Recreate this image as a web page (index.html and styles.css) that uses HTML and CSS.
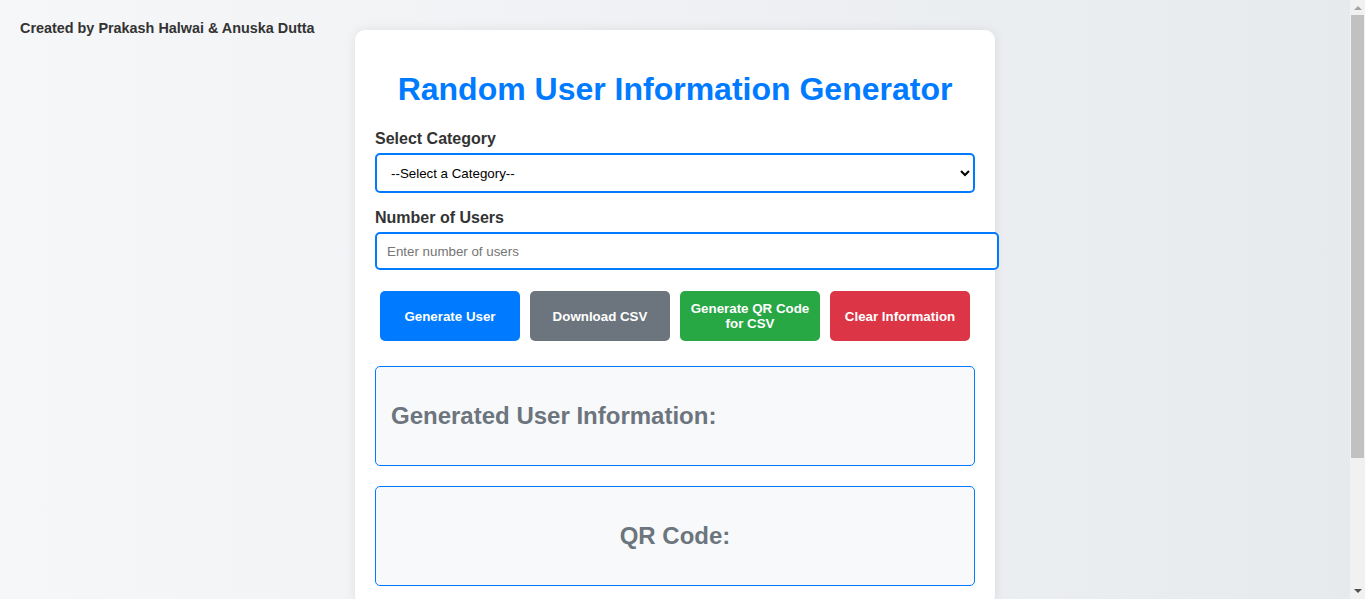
FILE: index.html
```html
<!DOCTYPE html>
<html lang="en">
<head>
<meta charset="UTF-8">
<title>Random User Information Generator</title>
<link rel="stylesheet" href="styles.css">
</head>
<body>
<div class="credit">Created by Prakash Halwai &amp; Anuska Dutta</div>
<div class="container">
  <h1 class="title">Random User Information Generator</h1>
  <label class="field-label" for="category">Select Category</label>
  <select id="category" class="select">
    <option>--Select a Category--</option>
  </select>
  <label class="field-label" for="count">Number of Users</label>
  <input id="count" class="input" type="number" placeholder="Enter number of users">
  <div class="buttons">
    <button class="btn btn-blue">Generate User</button>
    <button class="btn btn-gray">Download CSV</button>
    <button class="btn btn-green">Generate QR Code for CSV</button>
    <button class="btn btn-red">Clear Information</button>
  </div>
  <div class="box">
    <h2 class="box-title">Generated User Information:</h2>
  </div>
  <div class="box box-center">
    <h2 class="box-title">QR Code:</h2>
  </div>
</div>
<div class="scrollbar" aria-hidden="true">
  <div class="scroll-arrow scroll-up"></div>
  <div class="scroll-thumb"></div>
  <div class="scroll-arrow scroll-down"></div>
</div>
</body>
</html>
```
FILE: styles.css
```css
html, body {
  margin: 0;
  padding: 0;
}
body {
  font-family: "Liberation Sans", Arial, sans-serif;
  background: linear-gradient(to right, #f6f7f9, #e7eaed);
  min-height: 100vh;
  position: relative;
  color: #333;
  padding-right: 15px;
}
.credit {
  position: absolute;
  top: 20px;
  left: 20px;
  font-size: 14.4px;
  font-weight: bold;
  color: #333;
}
.container {
  width: 600px;
  margin: 30px auto 140px;
  padding: 20px;
  background: #fff;
  border-radius: 10px;
  box-shadow: 0 0 12px rgba(0, 0, 0, 0.08);
}
.title {
  text-align: center;
  color: #007bff;
  font-size: 32px;
  margin: 21px 0 22px;
}
.field-label {
  display: block;
  font-weight: bold;
  font-size: 16px;
  color: #333;
  margin-top: 1px;
  margin-bottom: 5px;
}
.select {
  display: block;
  width: 100%;
  height: 40px;
  padding: 0 10px;
  border: 2px solid #007bff;
  border-radius: 5px;
  font-family: "Liberation Sans", Arial, sans-serif;
  font-size: 13.33px;
  color: #000;
  background: #fff;
  margin-bottom: 16px;
  box-sizing: border-box;
  outline: none;
}
.input {
  display: block;
  width: 100%;
  height: 34px;
  padding: 0 10px;
  border: 2px solid #007bff;
  border-radius: 5px;
  font-family: "Liberation Sans", Arial, sans-serif;
  font-size: 13.33px;
  margin-bottom: 16px;
  outline: none;
}
.input::placeholder {
  color: #757575;
}
.buttons {
  display: flex;
}
.btn {
  width: 140px;
  margin: 5px;
  padding: 10px;
  border: none;
  border-radius: 5px;
  color: #fff;
  font-family: "Liberation Sans", Arial, sans-serif;
  font-weight: bold;
  font-size: 13.33px;
  line-height: 15px;
  min-height: 50px;
}
.btn-blue { background: #007bff; }
.btn-gray { background: #6c757d; }
.btn-green { background: #28a745; }
.btn-red { background: #dc3545; }
.box {
  margin-top: 20px;
  padding: 15px;
  background: #f8f9fa;
  border: 1px solid #007bff;
  border-radius: 5px;
  height: 68px;
  display: flex;
  align-items: center;
}
.box-center {
  justify-content: center;
}
.box-title {
  margin: 0;
  font-size: 24px;
  color: #6c757d;
}
.scrollbar {
  position: fixed;
  top: 0;
  right: 0;
  width: 15px;
  height: 100vh;
  background: #f1f1f1;
  display: flex;
  flex-direction: column;
  align-items: center;
}
.scroll-arrow {
  width: 0;
  height: 0;
  border-left: 4px solid transparent;
  border-right: 4px solid transparent;
}
.scroll-up {
  margin-top: 6px;
  border-bottom: 4px solid #a3a3a3;
}
.scroll-thumb {
  width: 13px;
  height: 443px;
  margin-top: 5px;
  background: #c1c1c1;
}
.scroll-down {
  margin-top: auto;
  margin-bottom: 6px;
  border-top: 4px solid #505050;
}
```
